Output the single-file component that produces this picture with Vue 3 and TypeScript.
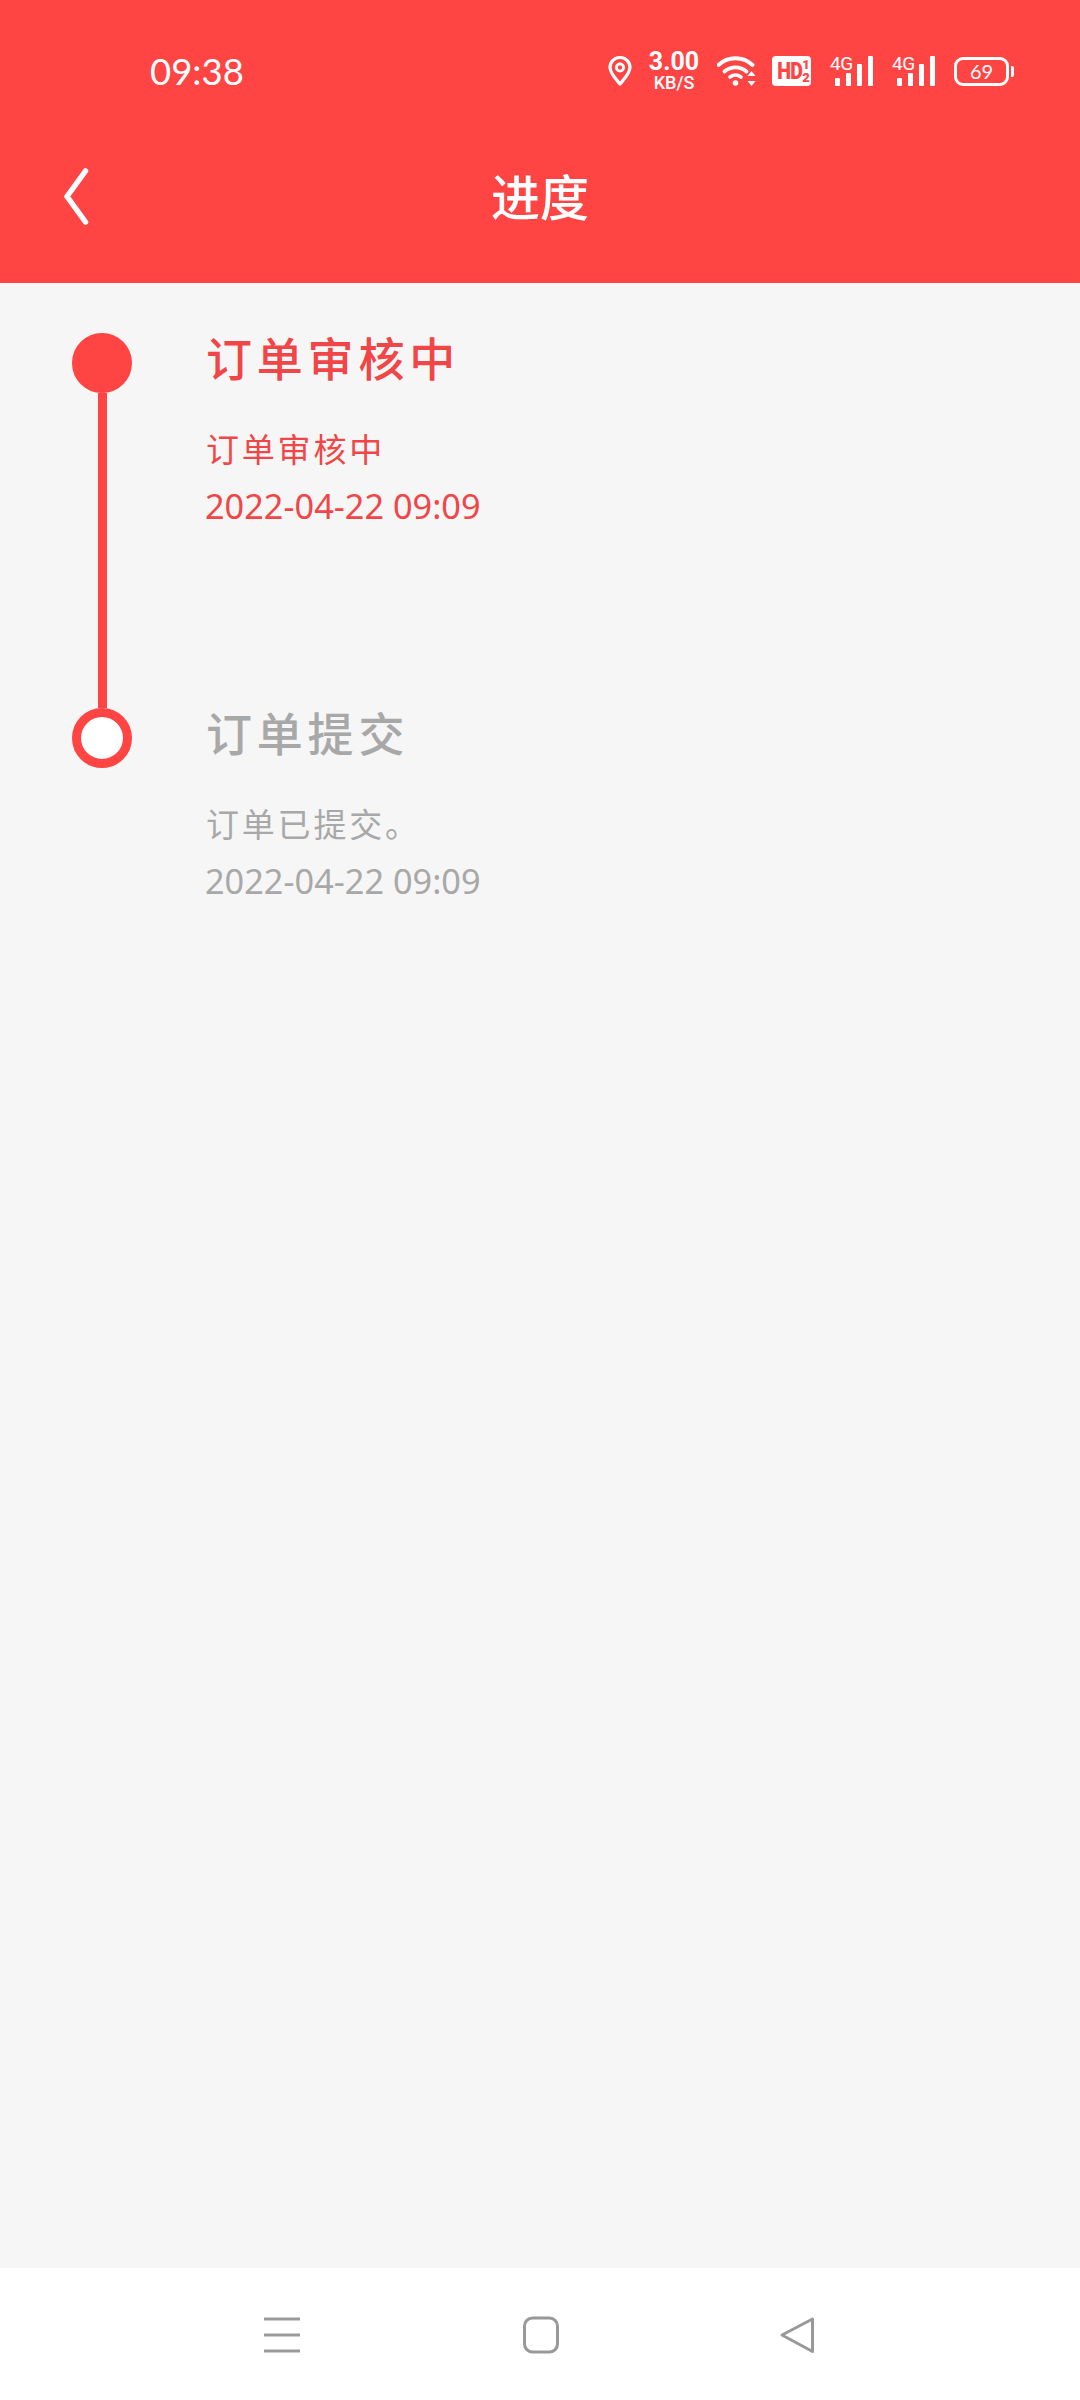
<template>
  <div class="page">
    <header class="head">
      <div class="status">
        <span class="time">09:38</span>
        <div class="status-right">
          <svg class="ic-pin" width="24" height="30" viewBox="0 0 24 30">
            <path d="M12 28 C7 22 2 17 2 11.5 A10 10 0 0 1 22 11.5 C22 17 17 22 12 28 Z" fill="none" stroke="#fff" stroke-width="3.2" stroke-linejoin="round" />
            <circle cx="12" cy="11.5" r="3.6" fill="none" stroke="#fff" stroke-width="2.8" />
          </svg>
          <div class="speed">
            <span class="speed-num">3.00</span>
            <span class="speed-unit">KB/S</span>
          </div>
          <svg class="ic-wifi" width="40" height="30" viewBox="0 0 40 30">
            <path d="M1.5 9 C11 0 26 0 35.5 9" fill="none" stroke="#fff" stroke-width="3.8" stroke-linecap="round" />
            <path d="M7.5 15.5 C14 10 23 10 29.5 15.5" fill="none" stroke="#fff" stroke-width="3.8" stroke-linecap="round" />
            <path d="M13 21 C16.5 18.5 20.5 18.5 24 21" fill="none" stroke="#fff" stroke-width="3.6" stroke-linecap="round" />
            <circle cx="18.5" cy="27" r="2.8" fill="#fff" />
            <path d="M34.5 15 L38.5 20 H30.5 Z M34.5 30 L30.5 25 H38.5 Z" fill="#fff" />
          </svg>
          <div class="hd">
            <span class="hd-main">HD</span>
            <span class="hd-frac"><i>1</i><i>2</i></span>
          </div>
          <div v-for="sim in sims" :key="sim" class="signal">
            <span class="signal-label">4G</span>
            <span v-for="(h, i) in bars" :key="i" class="bar" :style="{ height: h + 'px' }"></span>
          </div>
          <div class="battery">
            <span class="battery-body">69</span>
            <span class="battery-cap"></span>
          </div>
        </div>
      </div>
      <div class="titlebar">
        <svg class="back" width="26" height="58" viewBox="0 0 26 58">
          <path d="M22.5 3 L4 28.5 L22.5 54" fill="none" stroke="#fff" stroke-width="5.5" stroke-linecap="round" stroke-linejoin="round" />
        </svg>
        <h1 class="title">进度</h1>
      </div>
    </header>

    <main class="timeline">
      <section v-for="(step, i) in steps" :key="step.title" class="step" :class="{ active: step.active }">
        <div class="rail">
          <span class="dot"></span>
          <span v-if="i < steps.length - 1" class="line"></span>
        </div>
        <div class="info">
          <div class="step-title">{{ step.title }}</div>
          <div class="step-desc">{{ step.desc }}</div>
          <div class="step-time">{{ step.time }}</div>
        </div>
      </section>
    </main>

    <footer class="nav">
      <svg width="40" height="38" viewBox="0 0 40 38">
        <path d="M1 3 H37 M1 19 H37 M1 35 H37" stroke="#999" stroke-width="3" fill="none" />
      </svg>
      <svg width="38" height="38" viewBox="0 0 38 38">
        <rect x="2.5" y="2" width="33" height="34" rx="8" fill="none" stroke="#999" stroke-width="3" />
      </svg>
      <svg width="38" height="38" viewBox="0 0 38 38">
        <path d="M33.5 3 L3 19 L33.5 35.5 Z" fill="none" stroke="#999" stroke-width="3" stroke-linejoin="round" />
      </svg>
    </footer>
  </div>
</template>

<script setup lang="ts">
const sims = ['sim1', 'sim2']
const bars = [8, 13, 22, 30]

const steps = [
  { title: '订单审核中', desc: '订单审核中', time: '2022-04-22 09:09', active: true },
  { title: '订单提交', desc: '订单已提交。', time: '2022-04-22 09:09', active: false },
]
</script>

<style>
html, body { margin: 0; background: #f6f6f6; }
</style>

<style scoped>
.page {
  width: 1080px;
  height: 2400px;
  display: flex;
  flex-direction: column;
  background: #f6f6f6;
  font-family: "Noto Sans", "Noto Sans CJK SC", sans-serif;
  overflow: hidden;
}

.head { height: 283px; background: #ff4444; color: #fff; flex: none; }

.status {
  height: 100px;
  padding: 49px 66px 0 150px;
  box-sizing: border-box;
  display: flex;
  justify-content: space-between;
  align-items: flex-start;
}
.time { font-family: Lato, sans-serif; font-size: 36.5px; line-height: 44px; }

.status-right { display: flex; align-items: center; height: 36px; margin-top: 4px; }
.ic-pin { margin-right: 16px; }
.speed { width: 52px; margin-right: 17px; display: flex; flex-direction: column; align-items: center; font-family: Roboto, sans-serif; font-weight: 700; }
.speed-num { font-size: 25px; line-height: 20px; }
.speed-unit { font-size: 18px; line-height: 16px; margin-top: 3px; font-weight: 500; }
.ic-wifi { margin-right: 15px; }

.hd {
  width: 39px;
  height: 30px;
  margin-right: 19px;
  background: #fff;
  border-radius: 4px;
  color: #ff4444;
  display: flex;
  align-items: center;
  justify-content: center;
  font-family: Roboto, sans-serif;
  font-weight: 900;
}
.hd-main { font-size: 23px; letter-spacing: -1px; transform: scaleX(0.85); transform-origin: right; }
.hd-frac { display: flex; flex-direction: column; font-size: 13px; line-height: 13px; }
.hd-frac i { font-style: normal; }

.signal { position: relative; width: 43px; height: 30px; margin-right: 19px; display: flex; align-items: flex-end; justify-content: flex-end; gap: 6px; }
.signal-label { position: absolute; left: 0; top: -2px; font-family: Roboto, sans-serif; font-size: 19px; line-height: 19px; letter-spacing: -0.5px; }
.bar { width: 5px; background: #fff; border-radius: 1px; }

.battery { display: flex; align-items: center; gap: 2px; }
.battery-body {
  width: 55px;
  height: 29px;
  box-sizing: border-box;
  border: 3px solid #fff;
  border-radius: 9px;
  font-family: Lato, sans-serif;
  font-size: 20px;
  line-height: 23px;
  text-align: center;
}
.battery-cap { width: 3px; height: 11px; background: #fff; border-radius: 0 2px 2px 0; }

.titlebar { position: relative; height: 183px; display: flex; align-items: center; justify-content: center; }
.back { position: absolute; left: 63px; top: 68px; }
.title { margin: 10px 0 0; font-size: 49px; font-weight: 500; line-height: 60px; }

.timeline { flex: 1; padding: 50px 0 0 72px; }
.step { display: flex; height: 375px; color: #a8a8a8; }
.step.active { color: #f04648; }
.rail { width: 60px; display: flex; flex-direction: column; align-items: center; }
.dot { width: 60px; height: 60px; box-sizing: border-box; border-radius: 50%; border: 9px solid #ff4444; background: #fff; flex: none; }
.active .dot { background: #ff4444; }
.line { width: 9px; flex: 1; background: #ff4444; }

.info { margin: -5px 0 0 74px; }
.step-title { font-size: 46px; line-height: 60px; letter-spacing: 4.8px; font-weight: 500; }
.step-desc { margin-top: 40px; font-size: 33px; line-height: 44px; letter-spacing: 2.8px; }
.step-time { margin: 12px 0 0 -1px; font-size: 34.3px; line-height: 44px; }

.nav { height: 132px; box-sizing: border-box; background: #fff; flex: none; display: flex; align-items: flex-start; padding: 48px 0 0 263px; gap: 219px; }
</style>
